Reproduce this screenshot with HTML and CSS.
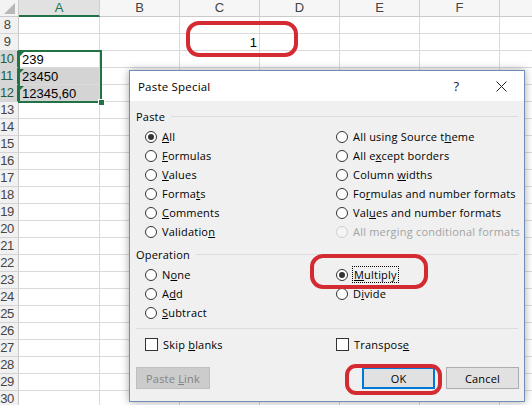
FILE: index.html
```html
<!DOCTYPE html>
<html lang="en">
  <head>
    <meta charset="UTF-8" />
    <title>Paste Special</title>
    <link rel="stylesheet" href="styles.css">
  </head>
  <body>
    <div class="screen">
      <div class="sheet" id="sheet"></div>

      <!-- selection A10:A12 -->
      <div class="selection"><span class="handle"></span></div>

      <!-- hand drawn marks -->
      <div class="mark mark-c9"></div>

      <div class="dialog">
        <div class="dialog-title">
          <span class="title-text">Paste Special</span>
          <span class="title-btn">?</span>
          <span class="title-btn">
            <svg width="11" height="11" viewBox="0 0 11 11"><path d="M0.5 0.5L10.5 10.5M10.5 0.5L0.5 10.5" stroke="#222" stroke-width="1"/></svg>
          </span>
        </div>
        <div class="dialog-body">
          <div class="group-label"><span>Paste</span><i></i></div>
          <div class="options">
            <label class="opt"><span class="radio checked"></span><span><u>A</u>ll</span></label>
            <label class="opt"><span class="radio"></span><span>All using Source t<u>h</u>eme</span></label>
            <label class="opt"><span class="radio"></span><span><u>F</u>ormulas</span></label>
            <label class="opt"><span class="radio"></span><span>All e<u>x</u>cept borders</span></label>
            <label class="opt"><span class="radio"></span><span><u>V</u>alues</span></label>
            <label class="opt"><span class="radio"></span><span>Column <u>w</u>idths</span></label>
            <label class="opt"><span class="radio"></span><span>Forma<u>t</u>s</span></label>
            <label class="opt"><span class="radio"></span><span>Fo<u>r</u>mulas and number formats</span></label>
            <label class="opt"><span class="radio"></span><span><u>C</u>omments</span></label>
            <label class="opt"><span class="radio"></span><span>Val<u>u</u>es and number formats</span></label>
            <label class="opt"><span class="radio"></span><span>Validatio<u>n</u></span></label>
            <label class="opt disabled"><span class="radio"></span><span>All merging conditional formats</span></label>
          </div>

          <div class="group-label op-label"><span>Operation</span><i></i></div>
          <div class="options">
            <label class="opt"><span class="radio"></span><span>N<u>o</u>ne</span></label>
            <label class="opt"><span class="radio checked"></span><span class="focus"><u>M</u>ultiply</span></label>
            <label class="opt"><span class="radio"></span><span>A<u>d</u>d</span></label>
            <label class="opt"><span class="radio"></span><span>D<u>i</u>vide</span></label>
            <label class="opt"><span class="radio"></span><span><u>S</u>ubtract</span></label>
          </div>

          <div class="separator"></div>

          <div class="options">
            <label class="opt"><span class="check"></span><span>Skip <u>b</u>lanks</span></label>
            <label class="opt"><span class="check"></span><span>Transpos<u>e</u></span></label>
          </div>

          <div class="buttons">
            <button class="btn" disabled>Paste <u>L</u>ink</button>
            <span class="spacer"></span>
            <button class="btn default">OK</button>
            <button class="btn">Cancel</button>
          </div>
        </div>
      </div>

      <div class="mark mark-multiply"></div>
      <div class="mark mark-ok"></div>
    </div>

    <script>
      const sheet = document.getElementById("sheet");
      const cols = ["A", "B", "C", "D", "E", "F", ""];

      // values that sit in the visible cells
      const values = {
        C9: "1",
        A10: "239",
        A11: "23450",
        A12: "12345,60",
      };
      const textNumbers = ["A10", "A11", "A12"];
      const selectedRows = [10, 11, 12];

      function cell(cls, text) {
        const el = document.createElement("div");
        el.className = cls;
        if (text) el.textContent = text;
        sheet.appendChild(el);
        return el;
      }

      // header row
      const corner = cell("corner");
      corner.innerHTML =
        '<svg width="11" height="11" viewBox="0 0 11 11"><path d="M11 0V11H0Z" fill="#b8b8b8"/></svg>';
      cols.forEach((c) => {
        cell(c === "A" ? "col-head active" : "col-head", c);
      });

      // rows 8 - 30
      for (let r = 8; r <= 30; r++) {
        const sel = selectedRows.includes(r);
        cell(sel ? "row-head active" : "row-head", String(r));
        cols.forEach((c) => {
          const id = c + r;
          let cls = "cell";
          if (c === "A" && (r === 11 || r === 12)) cls += " shaded";
          if (id === "C9") cls += " num";
          const el = cell(cls, values[id]);
          if (textNumbers.includes(id)) {
            const tri = document.createElement("span");
            tri.className = "flag";
            el.appendChild(tri);
          }
        });
      }
    </script>
  </body>
</html>
```

FILE: styles.css
```css
* {
  box-sizing: border-box;
}
body {
  margin: 0;
  background: #fff;
  overflow: hidden;
}
.screen {
  position: relative;
  width: 532px;
  height: 405px;
  overflow: hidden;
}

/* worksheet grid */
.sheet {
  display: grid;
  grid-template-columns: 19px 81px repeat(6, 80px);
  grid-auto-rows: 17px;
  font-family: "Liberation Sans", Arial, sans-serif;
  font-size: 13px;
  color: #000;
}
.corner {
  background: #f3f3f3;
  border-right: 1px solid #c9c9c9;
  border-bottom: 1px solid #c9c9c9;
  padding: 3px 0 0 4px;
}
.corner svg {
  display: block;
}
.col-head {
  background: #f6f6f6;
  border-right: 1px solid #cfcfcf;
  border-bottom: 1px solid #c9c9c9;
  text-align: center;
  line-height: 16px;
  color: #444;
}
.col-head.active {
  background: #e1e1e1;
  color: #217346;
  border-bottom: 2px solid #217346;
}
.row-head {
  background: #f1f1f1;
  border-right: 1px solid #c9c9c9;
  border-bottom: 1px solid #d4d4d4;
  padding-right: 4px;
  text-align: center;
  line-height: 16px;
  color: #444;
  letter-spacing: -0.5px;
}
.row-head.active {
  background: #d6d6d6;
  color: #1e5e39;
  border-right: 2px solid #217346;
}
.cell {
  position: relative;
  border-right: 1px solid #dadada;
  border-bottom: 1px solid #dadada;
  padding: 0 2px 0 3px;
  line-height: 17px;
  white-space: nowrap;
}
.cell.shaded {
  background: #d4d4d4;
}
.cell.num {
  text-align: right;
}
.flag {
  position: absolute;
  left: 1px;
  top: 1px;
  width: 0;
  height: 0;
  border-top: 4px solid #217346;
  border-right: 4px solid transparent;
}

.selection {
  position: absolute;
  left: 18px;
  top: 50px;
  width: 84px;
  height: 53px;
  border: 2px solid #217346;
}
.selection .handle {
  position: absolute;
  right: -5px;
  bottom: -5px;
  width: 7px;
  height: 7px;
  background: #217346;
  border: 1px solid #fff;
}

/* red marker outlines */
.mark {
  position: absolute;
  border: 4px solid #d42a31;
  border-radius: 13px;
}
.mark-c9 {
  left: 186px;
  top: 21px;
  width: 112px;
  height: 36px;
}
.mark-multiply {
  left: 310px;
  top: 254px;
  width: 118px;
  height: 35px;
}
.mark-ok {
  left: 345px;
  top: 364px;
  width: 97px;
  height: 31px;
  border-radius: 11px;
}

/* Paste Special dialog */
.dialog {
  position: absolute;
  left: 129px;
  top: 70px;
  width: 396px;
  height: 332px;
  border: 1px solid #6f8fb8;
  background: #f0f0f0;
  box-shadow: 0 0 8px rgba(0, 0, 0, 0.35);
  font-family: "Open Sans", "Noto Sans", sans-serif;
  font-size: 11px;
  letter-spacing: 0.2px;
  color: #000;
  display: flex;
  flex-direction: column;
}
.dialog-title {
  height: 30px;
  background: #fff;
  display: flex;
  align-items: center;
  padding-left: 8px;
  font-size: 11.5px;
}
.title-text {
  flex: 1;
}
.title-btn {
  width: 45px;
  height: 30px;
  display: flex;
  align-items: center;
  justify-content: center;
  font-size: 13px;
  color: #222;
}
.dialog-body {
  flex: 1;
  padding: 7px 6px 0 6px;
}
.group-label {
  display: flex;
  align-items: center;
  height: 16px;
  gap: 6px;
}
.group-label i {
  flex: 1;
  height: 1px;
  background: #dcdcdc;
}
.op-label {
  margin-top: 5px;
}
.options {
  display: grid;
  grid-template-columns: 191px 1fr;
  grid-auto-rows: 19px;
  padding-left: 9px;
  margin-top: 3px;
}
.opt {
  display: flex;
  align-items: center;
  gap: 5px;
  white-space: nowrap;
}
.radio {
  width: 12px;
  height: 12px;
  border: 1px solid #333;
  border-radius: 50%;
  background: #fff;
  display: flex;
  align-items: center;
  justify-content: center;
  flex: none;
}
.radio.checked::after {
  content: "";
  width: 6px;
  height: 6px;
  border-radius: 50%;
  background: #333;
}
.opt.disabled {
  color: #a3a3a3;
}
.opt.disabled .radio {
  border-color: #cfcfcf;
  background: #f4f4f4;
}
.focus {
  outline: 1px dotted #000;
  padding: 0 1px;
}
.check {
  width: 13px;
  height: 13px;
  border: 1px solid #333;
  background: #fff;
  flex: none;
}
.separator {
  height: 1px;
  background: #dcdcdc;
  margin: 6px 0 6px;
}
.buttons {
  display: flex;
  margin-top: 13px;
  margin-right: -1px;
  gap: 11px;
}
.spacer {
  flex: 1;
}
.btn {
  width: 73px;
  height: 22px;
  border: 1px solid #adadad;
  background: #e1e1e1;
  font-family: inherit;
  font-size: 11px;
  letter-spacing: 0.2px;
  color: #000;
  padding: 0;
}
.btn[disabled] {
  width: 74px;
  background: #cccccc;
  border-color: #bfbfbf;
  color: #838383;
}
.btn.default {
  border: 2px solid #0078d7;
}
```
